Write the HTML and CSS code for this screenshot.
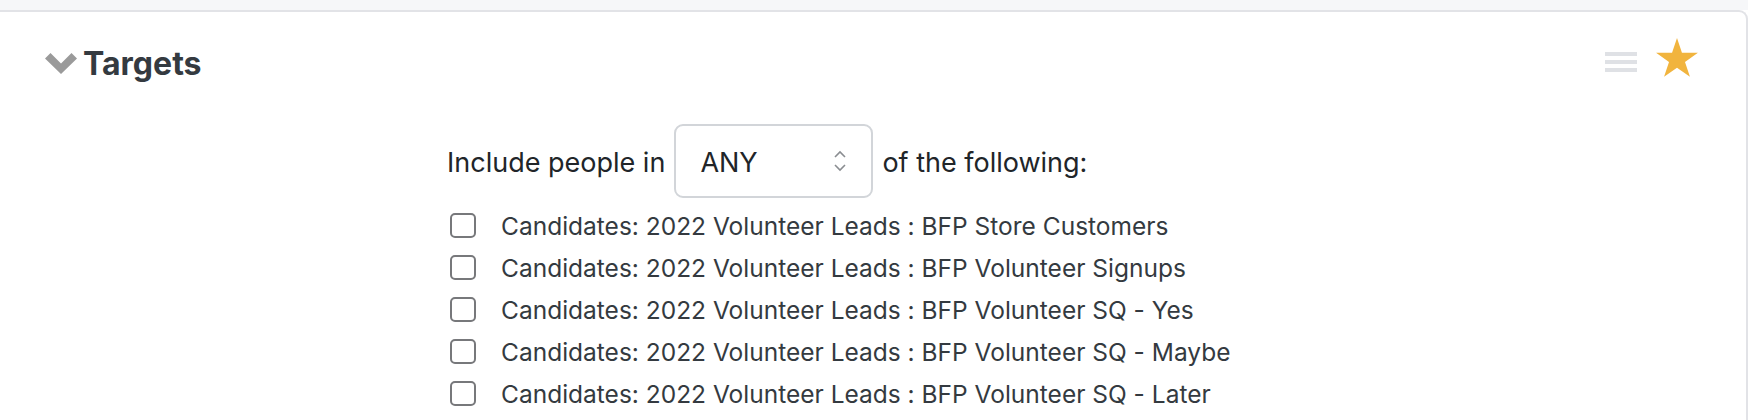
FILE: index.html
```html
<!DOCTYPE html>
<html lang="en">
<head>
<meta charset="utf-8">
<title>Targets</title>
<link rel="stylesheet" href="styles.css">
</head>
<body>
<div class="topband"></div>
<section class="panel">
  <header class="panel-head">
    <div class="title-group">
      <svg class="chevron" width="32" height="21" viewBox="0 0 32 21" aria-hidden="true">
        <polygon points="0,5.5 5.5,0 16,10.5 26.5,0 32,5.5 16,21" fill="#9a9a9a"/>
      </svg>
      <h2 class="title">Targets</h2>
    </div>
    <div class="actions">
      <svg class="handle" width="32" height="20" viewBox="0 0 32 20" aria-hidden="true">
        <rect x="0" y="0" width="32" height="4" fill="#dfe1e5"/>
        <rect x="0" y="8" width="32" height="4" fill="#dfe1e5"/>
        <rect x="0" y="16" width="32" height="4" fill="#dfe1e5"/>
      </svg>
      <svg class="star" width="42" height="39" viewBox="0 0 42 40" preserveAspectRatio="none" aria-hidden="true">
        <polygon points="21,0 25.94,15.2 41.92,15.2 28.99,24.6 33.93,39.8 21,30.4 8.07,39.8 13.01,24.6 0.08,15.2 16.06,15.2" fill="#f1b43e"/>
      </svg>
    </div>
  </header>
  <div class="panel-body">
    <div class="include-row">
      <span class="inc-text">Include people in</span>
      <div class="select">
        <span class="select-value">ANY</span>
        <svg class="updown" width="14" height="22" viewBox="0 0 14 22" aria-hidden="true">
          <polyline points="2,7 7,2 12,7" fill="none" stroke="#8a8d91" stroke-width="1.6"/>
          <polyline points="2,15 7,20 12,15" fill="none" stroke="#8a8d91" stroke-width="1.6"/>
        </svg>
      </div>
      <span class="inc-text">of the following:</span>
    </div>
    <ul class="options">
      <li class="option"><span class="box"></span><span class="label">Candidates: 2022 Volunteer Leads : BFP Store Customers</span></li>
      <li class="option"><span class="box"></span><span class="label">Candidates: 2022 Volunteer Leads : BFP Volunteer Signups</span></li>
      <li class="option"><span class="box"></span><span class="label">Candidates: 2022 Volunteer Leads : BFP Volunteer SQ - Yes</span></li>
      <li class="option"><span class="box"></span><span class="label">Candidates: 2022 Volunteer Leads : BFP Volunteer SQ - Maybe</span></li>
      <li class="option"><span class="box"></span><span class="label">Candidates: 2022 Volunteer Leads : BFP Volunteer SQ - Later</span></li>
    </ul>
  </div>
</section>
</body>
</html>
```

FILE: styles.css
```css
html, body {
  margin: 0;
  padding: 0;
  background: #ffffff;
  overflow: hidden;
}
body {
  font-family: Inter, "Noto Sans", "Liberation Sans", sans-serif;
  font-feature-settings: "calt" 0;
  color: #212529;
  width: 1748px;
  height: 420px;
}
.topband {
  height: 10px;
  background: #f6f7f9;
}
.panel {
  background: #ffffff;
  border-top: 2px solid #e2e3e7;
  border-right: 2px solid #e2e3e7;
  border-top-right-radius: 9px;
  padding-top: 26px;
  height: 400px;
}
.panel-head {
  display: flex;
  align-items: center;
  justify-content: space-between;
  height: 50px;
  padding: 0 48px 0 45px;
}
.title-group {
  display: flex;
  align-items: center;
  gap: 6px;
}
.chevron {
  display: block;
  margin-top: 1px;
}
.title {
  margin: 2px 0 0 0;
  font-size: 32px;
  line-height: 38px;
  font-weight: 700;
  color: #343a40;
}
.actions {
  display: flex;
  align-items: center;
  gap: 19px;
}
.handle {
  display: block;
  margin-bottom: 2px;
}
.star {
  display: block;
  margin-bottom: 11px;
}
.panel-body {
  padding-left: 447px;
  margin-top: 36px;
}
.include-row {
  display: flex;
  align-items: center;
  gap: 9px;
  height: 74px;
}
.inc-text {
  font-size: 27px;
  line-height: 34px;
  padding-top: 3px;
  color: #212529;
}
.select {
  box-sizing: border-box;
  width: 199px;
  height: 74px;
  border: 2px solid #d2d5d9;
  border-radius: 9px;
  display: flex;
  align-items: center;
  justify-content: space-between;
  padding: 0 24px 0 24px;
}
.select-value {
  font-size: 27px;
  line-height: 34px;
  padding-top: 3px;
  color: #212529;
}
.updown {
  display: block;
}
.options {
  list-style: none;
  margin: 6px 0 0 0;
  padding: 0 0 0 3px;
}
.option {
  display: flex;
  align-items: center;
  height: 42px;
}
.box {
  box-sizing: border-box;
  width: 26px;
  height: 25px;
  border: 2px solid #77787b;
  border-radius: 5px;
  background: #ffffff;
  flex: none;
}
.label {
  margin-left: 25px;
  font-size: 24.5px;
  line-height: 30px;
  letter-spacing: 0;
  padding-top: 1px;
  color: #343a40;
}
```
